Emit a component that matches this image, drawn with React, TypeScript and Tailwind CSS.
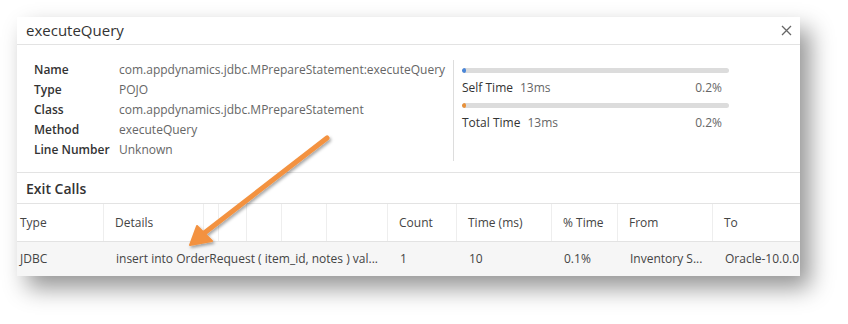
const font = { fontFamily: '"Open Sans", "Liberation Sans", sans-serif' };

const info = [
  ["Name", "com.appdynamics.jdbc.MPrepareStatement:executeQuery"],
  ["Type", "POJO"],
  ["Class", "com.appdynamics.jdbc.MPrepareStatement"],
  ["Method", "executeQuery"],
  ["Line Number", "Unknown"],
];

// header cells: label + width in px
const cols: [string, number][] = [
  ["Type", 87],
  ["Details", 100],
  ["", 15],
  ["", 28],
  ["", 35],
  ["", 45],
  ["", 61],
  ["Count", 69],
  ["Time (ms)", 95],
  ["% Time", 66],
  ["From", 95],
  ["To", 87],
];

function TimeBar({ label, value, pct, color }: { label: string; value: string; pct: string; color: string }) {
  return (
    <div className="w-[267px]">
      <div className="h-[5px] w-full rounded-full bg-[#dcdcdc] overflow-hidden">
        <div className={`h-full w-[4px] rounded-full ${color}`} />
      </div>
      <div className="flex items-center justify-between pr-[7px] h-[30px] text-[12px]">
        <span>
          <span className="text-[#333]">{label}</span>
          <span className="text-[#666] ml-[7px]">{value}</span>
        </span>
        <span className="text-[#666]">{pct}</span>
      </div>
    </div>
  );
}

export default function App() {
  return (
    <div className="relative w-[848px] h-[324px] bg-white pl-[17px] pt-[17px]" style={font}>
      <div className="w-[783px] h-[259px] bg-white overflow-hidden shadow-[10px_12px_22px_rgba(0,0,0,0.42)] flex flex-col">
        {/* Title bar */}
        <div className="h-[28px] shrink-0 border-b border-[#e3e3e3] flex items-center justify-between pl-[9px] pr-[8px]">
          <span className="text-[15px] text-[#333]">executeQuery</span>
          <svg width="11" height="11" viewBox="0 0 11 11" className="text-[#666]">
            <path d="M1 1l9 9M10 1l-9 9" stroke="currentColor" strokeWidth="1.3" />
          </svg>
        </div>

        {/* Info */}
        <div className="h-[128px] shrink-0 border-b border-[#e3e3e3] flex pt-[15px]">
          <div className="w-[437px] shrink-0 pl-[17px] border-r border-[#dddddd] h-[101px]">
            {info.map(([k, v]) => (
              <div key={k} className="flex h-[20px] items-center text-[12px] whitespace-nowrap">
                <span className="w-[85px] shrink-0 font-semibold text-[#333]">{k}</span>
                <span className="text-[#666]">{v}</span>
              </div>
            ))}
          </div>
          <div className="pl-[8px] pt-[8px]">
            <TimeBar label="Self Time" value="13ms" pct="0.2%" color="bg-[#4a86d8]" />
            <TimeBar label="Total Time" value="13ms" pct="0.2%" color="bg-[#e8913a]" />
          </div>
        </div>

        {/* Exit calls */}
        <div className="h-[31px] shrink-0 border-b border-[#e3e3e3] flex items-center pl-[9px]">
          <span className="text-[14px] font-semibold text-[#333]">Exit Calls</span>
        </div>
        <div className="h-[38px] shrink-0 border-b border-[#e3e3e3] flex">
          {cols.map(([c, w], i) => (
            <div
              key={i}
              style={{ width: w }}
              className={`shrink-0 h-full flex items-center text-[12px] text-[#444] whitespace-nowrap ${i < cols.length - 1 ? "border-r border-[#eeeeee]" : ""} ${i > 0 ? "pl-[11px]" : "pl-[3px]"}`}
            >
              {c}
            </div>
          ))}
        </div>
        <div className="flex-1 bg-[#f6f6f6] flex items-center text-[12px] text-[#444] whitespace-nowrap">
          <span className="w-[87px] shrink-0 pl-[3px]">JDBC</span>
          <span className="w-[284px] shrink-0 pl-[12px]">insert into OrderRequest ( item_id, notes ) val...</span>
          <span className="w-[69px] shrink-0 pl-[12px]">1</span>
          <span className="w-[95px] shrink-0 pl-[12px]">10</span>
          <span className="w-[66px] shrink-0 pl-[12px]">0.1%</span>
          <span className="w-[95px] shrink-0 pl-[12px]">Inventory S...</span>
          <span className="shrink-0 pl-[12px]">Oracle-10.0.0</span>
        </div>
      </div>

      {/* annotation arrow */}
      <svg className="absolute left-0 top-0 pointer-events-none" width="848" height="324">
        <defs>
          <filter id="sh" x="-20%" y="-20%" width="140%" height="140%">
            <feDropShadow dx="1.5" dy="2" stdDeviation="1.5" floodColor="#000" floodOpacity="0.35" />
          </filter>
        </defs>
        <g filter="url(#sh)" fill="#f39240" stroke="#f39240">
          <line x1="327" y1="138" x2="203" y2="234" strokeWidth="5" strokeLinecap="round" />
          <polygon points="190,245 197,226 212,241" strokeWidth="2" strokeLinejoin="round" />
        </g>
      </svg>
    </div>
  );
}
